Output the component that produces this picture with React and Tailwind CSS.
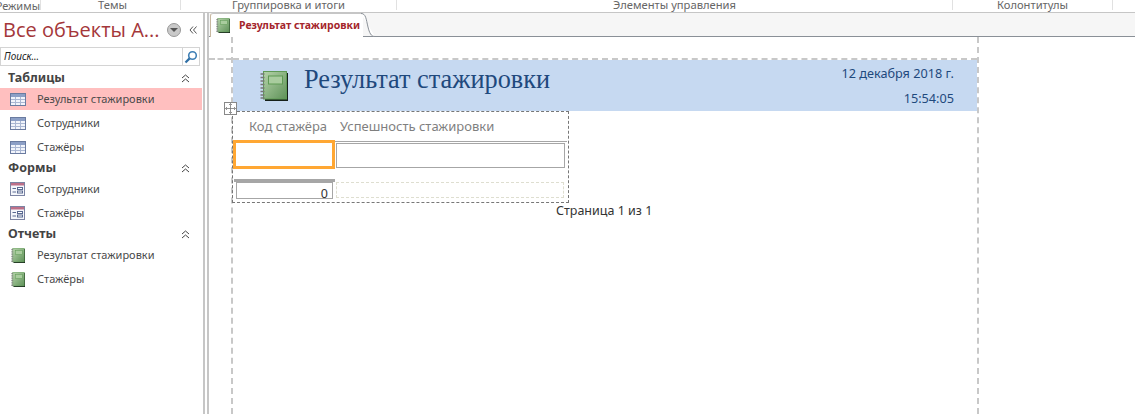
import React from "react";

const UI_FONT = "font-['Noto_Sans','Open_Sans',sans-serif]";

const TableIcon = () => (
  <svg width="16" height="13" viewBox="0 0 16 13" className="shrink-0">
    <rect x="0.5" y="0.5" width="15" height="12" fill="#f1f4fb" stroke="#6a7ba0" />
    <rect x="1" y="1" width="14" height="3" fill="#8c9fc6" />
    <path d="M1 6.5H15M1 9.5H15M5.5 4V12M10.5 4V12" stroke="#aab7d3" fill="none" />
  </svg>
);

const FormIcon = () => (
  <svg width="15" height="14" viewBox="0 0 15 14" className="shrink-0">
    <rect x="0.5" y="0.5" width="14" height="13" fill="#f4f6fb" stroke="#7c84a3" />
    <rect x="1" y="1" width="13" height="2.5" fill="#bd6f88" />
    <path d="M2.5 6.5H6M2.5 10H6" stroke="#5a6a92" fill="none" />
    <rect x="7.5" y="5.5" width="5" height="2" fill="#fff" stroke="#5a6a92" />
    <rect x="7.5" y="9" width="5" height="2" fill="#fff" stroke="#5a6a92" />
  </svg>
);

const ReportIcon = ({ width = 14, height = 15 }) => (
  <svg width={width} height={height} viewBox="0 0 28 30" preserveAspectRatio="none" className="shrink-0">
    <defs>
      <linearGradient id="reportFill" x1="0" y1="0" x2="1" y2="1">
        <stop offset="0" stopColor="#b5d3a9" />
        <stop offset="1" stopColor="#5f9259" />
      </linearGradient>
    </defs>
    <rect x="5" y="2" width="23" height="28" fill="#15201a" />
    <rect x="3.5" y="0.5" width="23" height="27.5" fill="url(#reportFill)" stroke="#5f9a55" />
    <rect x="8.5" y="5" width="14" height="8" fill="#a9cc9e" stroke="#5f9a55" />
    <path d="M0.5 3h4M0.5 6.5h4M0.5 10h4M0.5 13.5h4M0.5 17h4M0.5 20.5h4M0.5 24h4M0.5 27h4" stroke="#777" strokeWidth="1.5" fill="none" />
  </svg>
);

const Chevrons = () => (
  <svg width="9" height="9" viewBox="0 0 9 9" className="shrink-0">
    <path d="M1 4 4.5 1 8 4M1 8 4.5 5 8 8" stroke="#444" fill="none" />
  </svg>
);

const NavGroup = ({ title, items, icon }) => (
  <div>
    <div className="h-[18px] pb-[1px] pl-2 pr-[13px] flex items-center justify-between">
      <span className="text-[12.5px] font-bold text-[#444]">{title}</span>
      <Chevrons />
    </div>
    {items.map((item) => (
      <div
        key={item.name}
        className={`h-[22px] mb-[2px] mr-[1px] pl-[10px] flex items-center gap-[12px] text-[11px] text-[#4a4a4a] ${item.active ? "bg-[#ffbfbf]" : ""}`}
      >
        <span className="w-[15px] flex justify-center">{icon}</span>
        {item.name}
      </div>
    ))}
  </div>
);

const ribbonGroups = [
  { label: "Темы", width: "w-[136px]" },
  { label: "Группировка и итоги", width: "w-[216px]" },
  { label: "Элементы управления", width: "w-[556px]" },
  { label: "Колонтитулы", width: "w-[160px]" },
];

export default function App() {
  return (
    <div className={`w-[1135px] h-[414px] overflow-hidden bg-white flex flex-col ${UI_FONT}`}>
      {/* ribbon labels, cut off at the top */}
      <div className="h-[13px] shrink-0 flex border-b border-[#c6c6c6] overflow-hidden">
        <div className="w-[41px] h-[10px] shrink-0 mr-[4px] border-r border-[#e1e1e1] flex items-center justify-end text-[11px] leading-none text-[#666] whitespace-nowrap">
          Режимы
        </div>
        {ribbonGroups.map((g) => (
          <div
            key={g.label}
            className={`${g.width} h-[10px] shrink-0 border-r border-[#e1e1e1] flex items-center justify-center text-[11.2px] leading-none text-[#666] whitespace-nowrap`}
          >
            {g.label}
          </div>
        ))}
      </div>

      <div className="flex-1 flex min-h-0">
        {/* navigation pane */}
        <div className="w-[203px] shrink-0">
          <div className="h-[34px] flex items-center pl-[3px] pr-[6px]">
            <span className="text-[20px] leading-none text-[#a4373a] font-['Open_Sans',sans-serif]">Все объекты А...</span>
            <span className="ml-auto mr-[8px] w-[14px] h-[14px] rounded-full bg-[#c9c9c9] border border-[#999] flex items-center justify-center">
              <span className="w-0 h-0 border-x-[4px] border-x-transparent border-t-[4px] border-t-[#555]"></span>
            </span>
            <svg width="8" height="8" viewBox="0 0 8 8">
              <path d="M4 0.5 1 4l3 3.5M7.5 0.5 4.5 4l3 3.5" stroke="#555" fill="none" />
            </svg>
          </div>
          <div className="mr-[3px] h-[19px] border border-[#d4d4d4] flex items-center">
            <span className="flex-1 pl-[3px] text-[10px] italic text-[#222]">Поиск...</span>
            <span className="w-[17px] h-full border-l border-[#d4d4d4] flex items-center justify-center">
              <svg width="14" height="14" viewBox="0 0 14 14">
                <circle cx="8.5" cy="5.5" r="3.8" fill="#fff" stroke="#3f7fb5" strokeWidth="1.6" />
                <path d="M5.6 8.4 1.5 12.5" stroke="#2f6fa5" strokeWidth="2.2" />
              </svg>
            </span>
          </div>
          <div className="pt-[4px]">
            <NavGroup
              title="Таблицы"
              icon={<TableIcon />}
              items={[{ name: "Результат стажировки", active: true }, { name: "Сотрудники" }, { name: "Стажёры" }]}
            />
            <NavGroup title="Формы" icon={<FormIcon />} items={[{ name: "Сотрудники" }, { name: "Стажёры" }]} />
            <NavGroup title="Отчеты" icon={<ReportIcon />} items={[{ name: "Результат стажировки" }, { name: "Стажёры" }]} />
          </div>
        </div>

        {/* splitter */}
        <div className="w-[6px] shrink-0 border-x-2 border-[#c6c6c6]"></div>

        {/* document area */}
        <div className="flex-1 min-w-0 flex flex-col">
          <div className="h-[24px] shrink-0 bg-[#f6f6f6] border-b border-[#8a9097] flex items-end">
            <div className="ml-[1px] h-[24px] w-[153px] bg-white border-t border-l border-t-[#c6c6c6] border-l-[#c8b8a0] rounded-tl-[3px] flex items-center pl-[5px] gap-[9px] -mb-[1px] relative">
              <ReportIcon />
              <span className="text-[10.5px] font-bold text-[#a4262c] whitespace-nowrap">Результат стажировки</span>
              <svg width="14" height="24" viewBox="0 0 14 24" className="absolute -right-[12px] top-[-1px]">
                <path d="M0 0.5C5 0.5 5 6 7 14 8.5 20 10 23.5 14 23.5" fill="#fff" stroke="#8a9097" />
              </svg>
            </div>
          </div>

          <div className="flex-1 pl-[22px] min-h-0 relative">
            {/* top guide reaching out to the left edge */}
            <div className="absolute left-0 top-[21px] w-[23px] border-t-2 border-dashed border-[#c8c8c8]"></div>
            <div className="w-[748px] h-full border-x-2 border-dashed border-[#c8c8c8] pt-[21px]">
              <div className="border-t-2 border-dashed border-[#c8c8c8]">
                <div className="h-[51px] bg-[#c6d9f1] flex">
                  <div className="pl-[27px] pt-[11px] shrink-0">
                    <ReportIcon width={28} height={30} />
                  </div>
                  <div className="pl-[16px] pt-[4px] text-[26.3px] leading-[32px] text-[#1f497d] font-['Liberation_Serif',serif] whitespace-nowrap">
                    Результат стажировки
                  </div>
                  <div className="ml-auto pr-[23px] pt-[1px] text-[12.7px] leading-[25px] text-[#1f497d] text-right">
                    <div>12 декабря 2018 г.</div>
                    <div>15:54:05</div>
                  </div>
                </div>

                <div className="relative w-[337px] h-[92px] -ml-[1px] border border-dashed border-[#777]">
                  <div className="absolute -left-[9px] -top-[10px] w-[13px] h-[13px] bg-white border border-[#888] flex items-center justify-center">
                    <svg width="11" height="11" viewBox="0 0 11 11">
                      <path d="M5.5 0.5V10.5M0.5 5.5H10.5M4 2 5.5 0.5 7 2M4 9 5.5 10.5 7 9M2 4 0.5 5.5 2 7M9 4 10.5 5.5 9 7" stroke="#777" strokeWidth="0.8" fill="none" />
                    </svg>
                  </div>
                  <div className="h-[29px] flex items-center text-[13px] text-[#7f7f7f] whitespace-nowrap">
                    <span className="pl-[16px] w-[107px]">Код стажёра</span>
                    <span>Успешность стажировки</span>
                  </div>
                  <div className="h-[29px] mr-[1px] border-t border-[#a6a6a6] flex items-start">
                    <div className="-mt-[2px] w-[102px] h-[29px] shrink-0 border-[3px] border-[#ffa733] bg-white"></div>
                    <div className="ml-[1px] mt-[1px] w-[229px] h-[25px] shrink-0 border border-[#a6a6a6] bg-white"></div>
                  </div>
                  <div className="mt-[9px] ml-[1px] w-[101px] h-[3px] bg-[#a6a6a6]"></div>
                  <div className="flex">
                    <div className="ml-[3px] w-[97px] h-[17px] border border-[#a6a6a6] text-right pr-[4px] text-[12.5px] leading-[22px] text-[#333] overflow-hidden">
                      0
                    </div>
                    <div className="ml-[3px] w-[228px] h-[16px] border border-dashed border-[#deded0]"></div>
                  </div>
                </div>

                <div className="pl-[323px] text-[12.5px] leading-[16px] text-[#333]">Страница 1 из 1</div>
              </div>
            </div>
          </div>
        </div>
      </div>
    </div>
  );
}
